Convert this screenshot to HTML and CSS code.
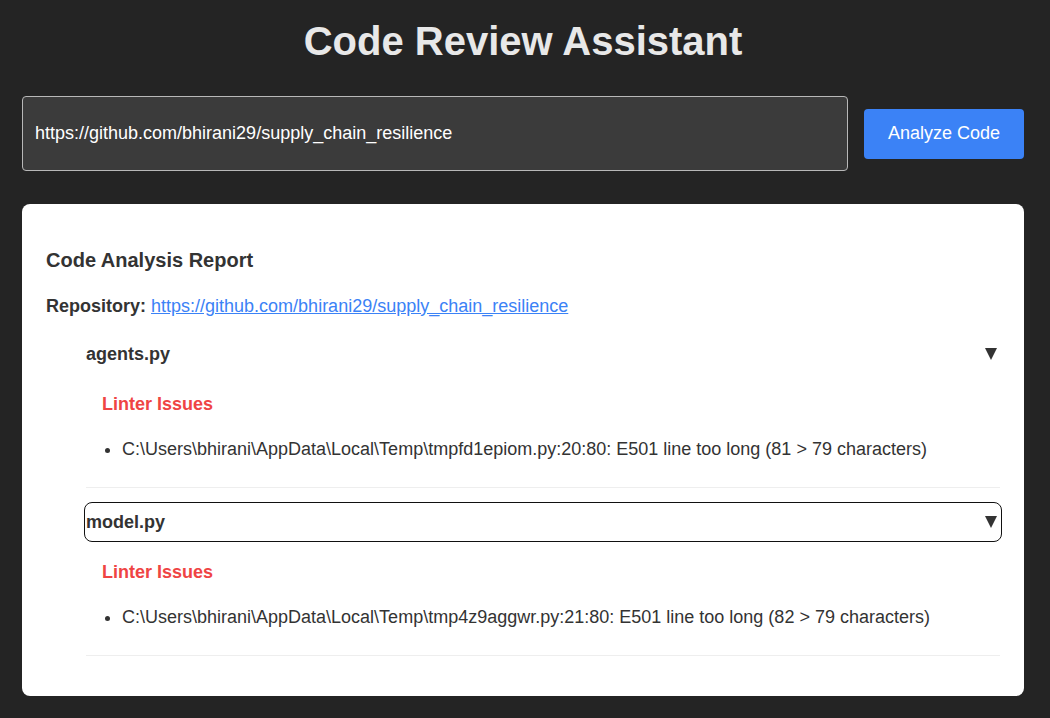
FILE: index.html
```html
<!DOCTYPE html>
<html lang="en">
<head>
<meta charset="utf-8">
<title>Code Review Assistant</title>
<link rel="stylesheet" href="styles.css">
</head>
<body>
<div class="app">
  <h1 class="title">Code Review Assistant</h1>
  <div class="search-row">
    <input class="repo-input" type="text" value="https://github.com/bhirani29/supply_chain_resilience">
    <button class="analyze-btn" type="button">Analyze Code</button>
  </div>
  <section class="report">
    <h3 class="report-title">Code Analysis Report</h3>
    <p class="repo-line"><strong>Repository:</strong> <a class="repo-link" href="#">https://github.com/bhirani29/supply_chain_resilience</a></p>
    <div class="files">
      <details class="file" open>
        <summary class="file-summary"><span>agents.py</span><svg class="caret" viewBox="0 0 12 12" width="12" height="12"><polygon points="0,0 12,0 6,12"/></svg></summary>
        <div class="file-body">
          <h4 class="issues-title">Linter Issues</h4>
          <ul class="issues">
            <li>C:\Users\bhirani\AppData\Local\Temp\tmpfd1epiom.py:20:80: E501 line too long (81 &gt; 79 characters)</li>
          </ul>
        </div>
      </details>
      <details class="file" open>
        <summary class="file-summary focused"><span>model.py</span><svg class="caret" viewBox="0 0 12 12" width="12" height="12"><polygon points="0,0 12,0 6,12"/></svg></summary>
        <div class="file-body">
          <h4 class="issues-title">Linter Issues</h4>
          <ul class="issues">
            <li>C:\Users\bhirani\AppData\Local\Temp\tmp4z9aggwr.py:21:80: E501 line too long (82 &gt; 79 characters)</li>
          </ul>
        </div>
      </details>
    </div>
  </section>
</div>
</body>
</html>
```

FILE: styles.css
```css
html, body {
  margin: 0;
  padding: 0;
  background: #242424;
}

body {
  font-family: "Liberation Sans", Arial, sans-serif;
  color: #333;
}

.app {
  padding: 18px 26px 0 22px;
}

.title {
  margin: 0;
  font-size: 40px;
  line-height: 46px;
  font-weight: bold;
  text-align: center;
  color: #e8e8e8;
}

.search-row {
  margin-top: 32px;
  display: flex;
  align-items: center;
  gap: 16px;
}

.repo-input {
  flex: 1;
  min-width: 0;
  height: 75px;
  box-sizing: border-box;
  padding: 0 12px;
  background: #3b3b3b;
  border: 1px solid #b8b8b8;
  border-radius: 4px;
  color: #ffffff;
  font-family: "Liberation Sans", Arial, sans-serif;
  font-size: 18px;
  outline: none;
}

.analyze-btn {
  width: 160px;
  height: 50px;
  padding: 0 24px;
  border: none;
  border-radius: 4px;
  background: #3b82f6;
  color: #ffffff;
  font-family: "Liberation Sans", Arial, sans-serif;
  font-size: 18px;
  white-space: nowrap;
}

.report {
  margin-top: 33px;
  background: #ffffff;
  border-radius: 8px;
  padding: 24px 24px 24px 24px;
}

.report-title {
  margin: 20px 0 0;
  font-size: 20px;
  line-height: 24px;
  font-weight: bold;
  color: #333;
}

.repo-line {
  margin: 22px 0 0;
  font-size: 18px;
  line-height: 24px;
  color: #333;
}

.repo-link {
  color: #3b82f6;
  text-decoration: underline;
}

.files {
  margin-top: 18px;
  margin-left: 40px;
}

.file {
  border-bottom: 1px solid #eeeeee;
  margin-bottom: 16px;
}

.file-summary {
  display: flex;
  justify-content: space-between;
  align-items: center;
  list-style: none;
  padding: 6px 0;
  font-size: 18px;
  line-height: 24px;
  font-weight: bold;
  color: #333;
  cursor: pointer;
  border-radius: 6px;
}

.file-summary::-webkit-details-marker {
  display: none;
}

.file-summary.focused {
  outline: 1.5px solid #111;
  outline-offset: 1px;
}

.caret {
  display: block;
  margin-right: 3px;
  fill: #333;
}

.file-body {
  padding: 20px 0 26px 16px;
}

.issues-title {
  margin: 0;
  font-size: 18px;
  line-height: 24px;
  font-weight: bold;
  color: #ef4444;
}

.issues {
  margin: 21px 0 0;
  padding-left: 20px;
  font-size: 18px;
  line-height: 24px;
  color: #333;
}
```
